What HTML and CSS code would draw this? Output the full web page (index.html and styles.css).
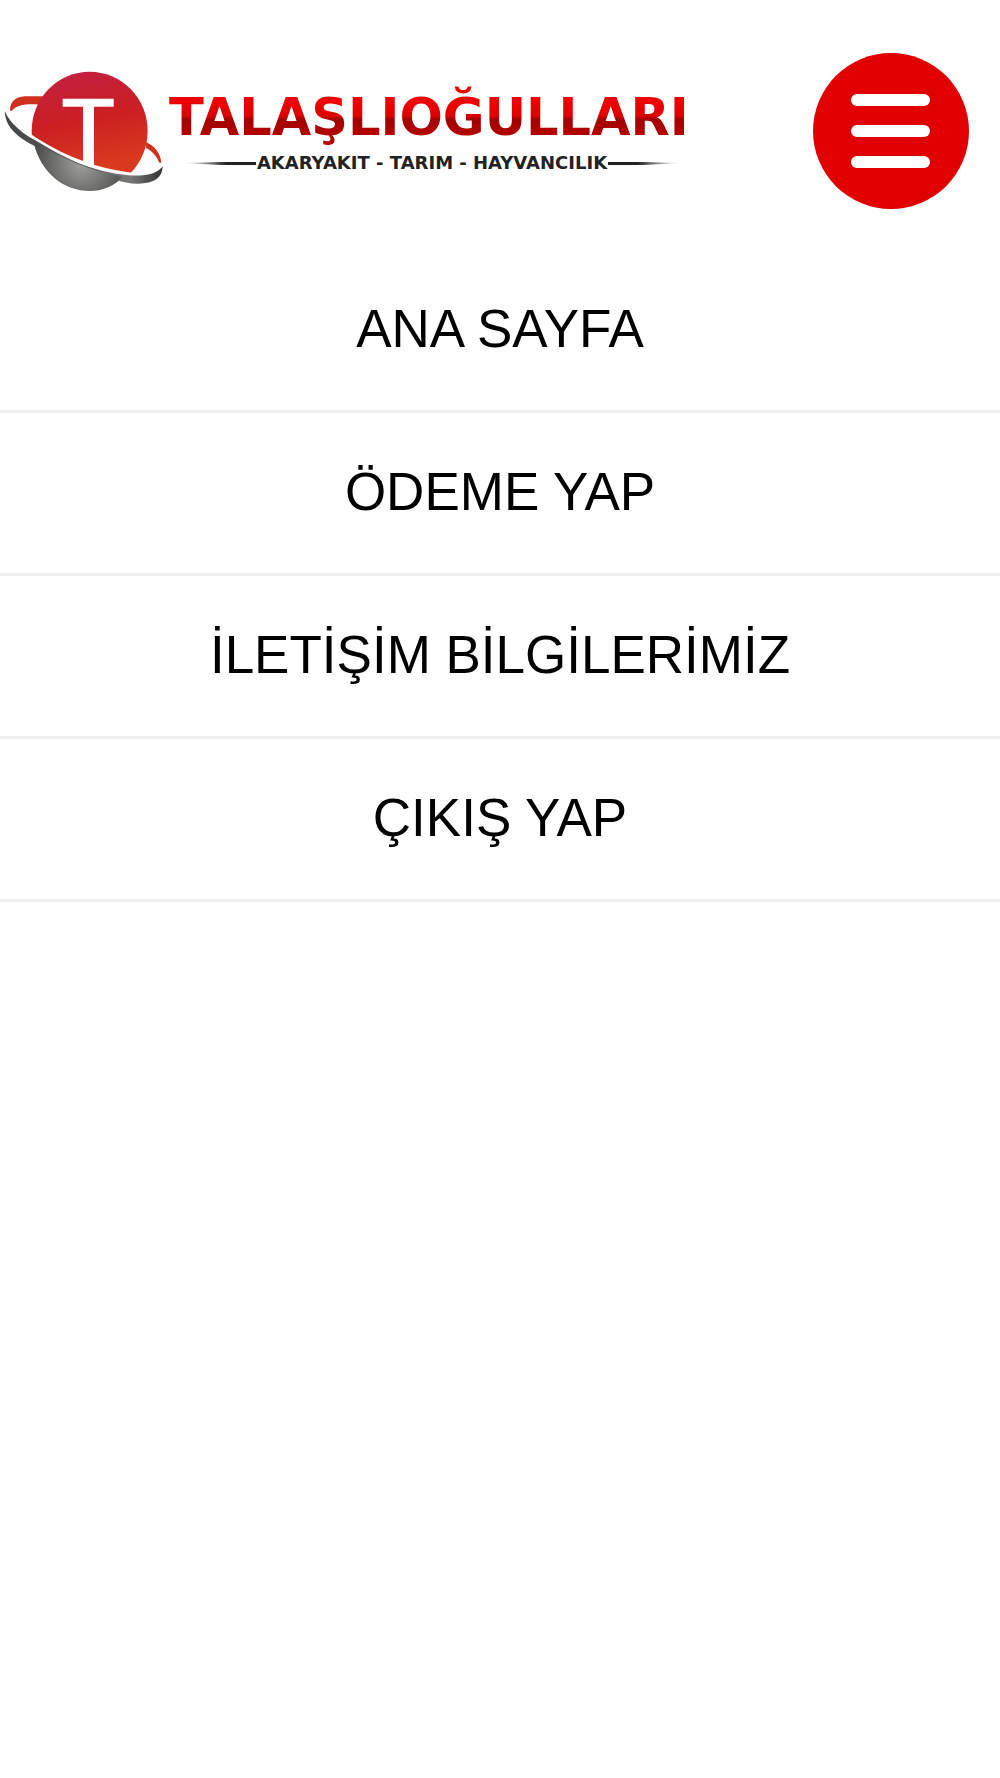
FILE: index.html
```html
<!DOCTYPE html>
<html lang="tr">
<head>
  <meta charset="UTF-8" />
  <title>Talaşlıoğulları</title>
  <meta name="viewport" content="width=device-width, initial-scale=1.0"/>
  <link rel="stylesheet" href="styles.css">
</head>
<body>
  <header class="header">
    <a class="logo" href="#" aria-label="Talaşlıoğulları">
      <svg viewBox="0 0 700 130">
        <defs>
          <linearGradient id="red" x1="0.4" y1="0" x2="0.6" y2="1">
            <stop offset="0" stop-color="#c2203f"/>
            <stop offset="0.4" stop-color="#cb1f22"/>
            <stop offset="0.8" stop-color="#d93a1e"/>
          </linearGradient>
          <radialGradient id="grey" gradientUnits="userSpaceOnUse" cx="245" cy="340" r="150">
            <stop offset="0" stop-color="#a0a09e"/>
            <stop offset="1" stop-color="#484846"/>
          </radialGradient>
          <linearGradient id="ring" x1="0" y1="0" x2="1" y2="0">
            <stop offset="0" stop-color="#444"/>
            <stop offset="0.3" stop-color="#555"/>
            <stop offset="0.8" stop-color="#777"/>
            <stop offset="1" stop-color="#333"/>
          </linearGradient>
          <linearGradient id="word" gradientUnits="userSpaceOnUse" x1="0" y1="30" x2="0" y2="70">
            <stop offset="0.2" stop-color="#ee0000"/>
            <stop offset="0.5" stop-color="#dc0000"/>
            <stop offset="0.58" stop-color="#a30000"/>
            <stop offset="1" stop-color="#b40000"/>
          </linearGradient>
          <linearGradient id="lineLeft">
            <stop offset="0" stop-color="#222" stop-opacity="0"/>
            <stop offset="0.6" stop-color="#222"/>
          </linearGradient>
          <linearGradient id="lineRight">
            <stop offset="0.4" stop-color="#222"/>
            <stop offset="1" stop-color="#222" stop-opacity="0"/>
          </linearGradient>
        </defs>
        <!-- planet -->
        <g transform="translate(0 -16) scale(0.3333)">
          <path fill="#d2301f" d="M30 182C30 154 46 142 74 139L134 139L120 164C86 161 52 162 36 182Z"/>
          <path fill="#d2301f" d="M438 276C464 288 482 310 484 338L478 338C470 320 458 304 438 294Z"/>
          <ellipse cx="269" cy="243" rx="174" ry="178" fill="url(#red)"/>
          <path fill="#fff" d="M92 252C180 312 290 358 400 368L440 400L440 440L80 440L80 252Z"/>
          <path fill="url(#grey)" d="M100 268C190 322 275 364 370 380C342 408 306 423 270 423C190 423 124 368 102 282Z"/>
          <path fill="url(#ring)" d="M14 183C32 222 64 248 104 270C190 326 280 366 384 376C440 380 474 370 488 349C488 384 460 402 412 401C388 401 368 396 350 390C270 370 160 320 100 286C50 260 16 230 14 183Z"/>
          <path fill="url(#grey)" d="M104 276C190 326 275 366 366 380L352 394C270 400 150 350 106 290Z"/>
          <path fill="#fff" d="M188 146H341V170H282V352L249 338V170H188Z"/>
        </g>
        <!-- name -->
        <text class="logo-name" x="169" y="69" fill="url(#word)">TALAŞLIOĞULLARI</text>
        <path fill="url(#lineLeft)" d="M184 97L220 96H256V99H220Z"/>
        <text class="logo-tagline" x="432" y="103" text-anchor="middle">AKARYAKIT - TARIM - HAYVANCILIK</text>
        <path fill="url(#lineRight)" d="M608 96H644L680 97L644 99H608Z"/>
      </svg>
    </a>
    <button class="menu-button" type="button" aria-label="Menü">
      <svg viewBox="0 0 156 156">
        <circle cx="78" cy="78" r="78" fill="#e00000"/>
        <g fill="#fff">
          <rect x="38" y="41" width="79" height="12" rx="6"/>
          <rect x="38" y="72" width="79" height="12" rx="6"/>
          <rect x="38" y="103" width="79" height="12" rx="6"/>
        </g>
      </svg>
    </button>
  </header>
  <nav class="menu">
    <a href="#">ANA SAYFA</a>
    <a href="#">ÖDEME YAP</a>
    <a href="#">İLETİŞİM BİLGİLERİMİZ</a>
    <a href="#">ÇIKIŞ YAP</a>
  </nav>
</body>
</html>
```
FILE: styles.css
```css
* {
  box-sizing: border-box;
}
body {
  margin: 0;
  font-family: "Liberation Sans", Arial, sans-serif;
  background-color: #fff;
  color: #000;
}
.header {
  display: flex;
  align-items: center;
  justify-content: space-between;
  padding: 53px 31px 41px 0;
}
.logo {
  flex: 0 1 700px;
}
.logo svg,
.menu-button svg {
  display: block;
  width: 100%;
}
.logo-name {
  font-family: "DejaVu Sans", sans-serif;
  font-size: 51px;
  font-weight: bold;
}
.logo-tagline {
  font-family: "DejaVu Sans", sans-serif;
  font-size: 18px;
  font-weight: bold;
  fill: #222;
}
.menu-button {
  flex: 0 0 156px;
  padding: 0;
  border: none;
  border-radius: 50%;
  background: none;
  cursor: pointer;
}
.menu a {
  display: block;
  padding: 49px 16px 51px;
  border-bottom: 3px solid #eee;
  color: #000;
  font-size: 53px;
  line-height: 60px;
  text-align: center;
  text-decoration: none;
}
```
